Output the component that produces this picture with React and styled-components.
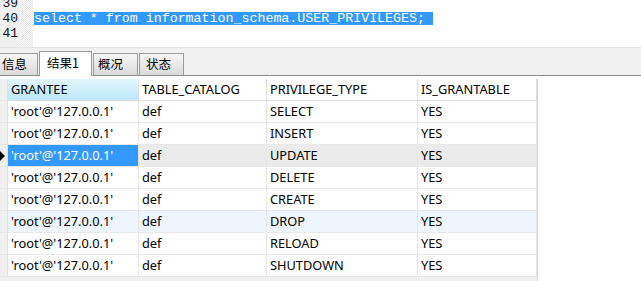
import React from 'react';
import styled, { createGlobalStyle } from 'styled-components';

const Global = createGlobalStyle`
  html, body { margin: 0; padding: 0; background: #fff; overflow: hidden; }
  body { font-family: "Noto Sans", "Noto Sans CJK SC", sans-serif; font-size: 12.8px; color: #000; }
`;

const Page = styled.div`
  width: 641px;
  height: 281px;
  display: flex;
  flex-direction: column;
  overflow: hidden;
`;

const Editor = styled.div`
  height: 47px;
  display: flex;
  border-bottom: 1px solid #e2e2e2;
  overflow: hidden;
  flex-shrink: 0;
`;

const Gutter = styled.div`
  width: 21px;
  background: #f0f0f0;
  font-family: "Liberation Mono", monospace;
  font-size: 13px;
  color: #111;
  text-align: right;
  padding-right: 3px;
  box-sizing: border-box;
`;

const FoldMargin = styled.div`
  width: 12px;
  background-color: #fff;
  background-image: repeating-conic-gradient(#e6e6e6 0 25%, #fbfbfb 0 50%);
  background-size: 2px 2px;
`;

const Code = styled.div`
  flex: 1;
  font-family: "Liberation Mono", monospace;
  font-size: 13.3px;
  padding-left: 1px;
`;

const Lines = styled.div`
  margin-top: -4px;
`;

const Line = styled.div`
  height: 15px;
  line-height: 15px;
  white-space: pre;
`;

const Selected = styled.span`
  display: inline-block;
  height: 13px;
  line-height: 13px;
  margin-top: 0;
  padding-right: 8px;
  background: #3399ff;
  color: #fff;
`;

const TabStrip = styled.div`
  height: 27px;
  background: #f0f0f0;
  border-bottom: 1px solid #8e8e8e;
  display: flex;
  align-items: flex-end;
  gap: 1px;
  flex-shrink: 0;
  margin-left: -8px;
`;

const Tab = styled.div`
  box-sizing: border-box;
  height: ${p => (p.$active ? '25px' : '22px')};
  width: ${p => p.$w}px;
  border: 1px solid #9a9a9a;
  border-bottom: none;
  background: ${p => (p.$active ? '#fff' : 'linear-gradient(#f7f7f7, #dadada)')};
  font-family: "Noto Sans CJK SC", sans-serif;
  font-size: 12.5px;
  line-height: ${p => (p.$active ? '22px' : '19px')};
  padding-left: ${p => p.$pad}px;
  margin-bottom: ${p => (p.$active ? '-1px' : '0')};
  position: relative;
  z-index: ${p => (p.$active ? 1 : 0)};
`;

const GridArea = styled.div`
  flex: 1;
  padding-top: 3px;
  display: flex;
  align-items: flex-start;
`;

const Grid = styled.div`
  display: grid;
  grid-template-columns: 8px 131px 128px 151px 119px;
  border-right: 1px solid #d8d8d8;
  background: #f0f0f0;
  height: 202px;
  align-content: start;
`;

const Indicator = styled.div`
  height: 22px;
  box-sizing: border-box;
  background: #f0f0f0;
  border-bottom: 1px solid #e4e4e4;
  border-right: 1px solid #e0e0e0;
  display: flex;
  align-items: center;
`;

const Arrow = styled.span`
  width: 0;
  height: 0;
  border-top: 5px solid transparent;
  border-bottom: 5px solid transparent;
  border-left: 5px solid #000;
`;

const HeadCell = styled.div`
  height: 22px;
  box-sizing: border-box;
  padding-left: 3px;
  line-height: 21px;
  border-right: 1px solid #dcdcdc;
  border-bottom: 1px solid #e0e0e0;
  background: ${p => (p.$sorted ? 'linear-gradient(#e4f6fd, #b9e8f8)' : '#fff')};
  color: #000;
`;

const Cell = styled.div`
  height: 22px;
  box-sizing: border-box;
  padding-left: 3px;
  line-height: 21px;
  border-right: 1px solid #e6e6e6;
  border-bottom: 1px solid #e8e8e8;
  background: ${p => p.$bg};
  color: ${p => (p.$focus ? '#fff' : '#000')};
  white-space: nowrap;
  overflow: hidden;
`;

const columns = ['GRANTEE', 'TABLE_CATALOG', 'PRIVILEGE_TYPE', 'IS_GRANTABLE'];
const privileges = ['SELECT', 'INSERT', 'UPDATE', 'DELETE', 'CREATE', 'DROP', 'RELOAD', 'SHUTDOWN'];

export default function App() {
  return (
    <Page>
      <Global />
      <Editor>
        <Gutter>
          <Lines>
            <Line>39</Line>
            <Line>40</Line>
            <Line>41</Line>
          </Lines>
        </Gutter>
        <FoldMargin />
        <Code>
          <Lines>
            <Line> </Line>
            <Line><Selected>select * from information_schema.USER_PRIVILEGES;</Selected></Line>
            <Line> </Line>
          </Lines>
        </Code>
      </Editor>
      <TabStrip>
        <Tab $w={46} $pad={9}>信息</Tab>
        <Tab $active $w={53} $pad={7}>结果1</Tab>
        <Tab $w={45} $pad={4}>概况</Tab>
        <Tab $w={45} $pad={6}>状态</Tab>
      </TabStrip>
      <GridArea>
        <Grid>
          <Indicator />
          {columns.map((c, i) => (
            <HeadCell key={c} $sorted={i === 0}>{c}</HeadCell>
          ))}
          {privileges.map((p, r) => {
            const current = r === 2;
            const hover = r === 5;
            const rowBg = current ? '#ebebeb' : hover ? '#eef5fd' : '#fff';
            return (
              <React.Fragment key={p}>
                <Indicator>{current && <Arrow />}</Indicator>
                <Cell $bg={current ? '#3399ff' : rowBg} $focus={current}>'root'@'127.0.0.1'</Cell>
                <Cell $bg={rowBg}>def</Cell>
                <Cell $bg={rowBg}>{p}</Cell>
                <Cell $bg={rowBg}>YES</Cell>
              </React.Fragment>
            );
          })}
        </Grid>
      </GridArea>
    </Page>
  );
}
